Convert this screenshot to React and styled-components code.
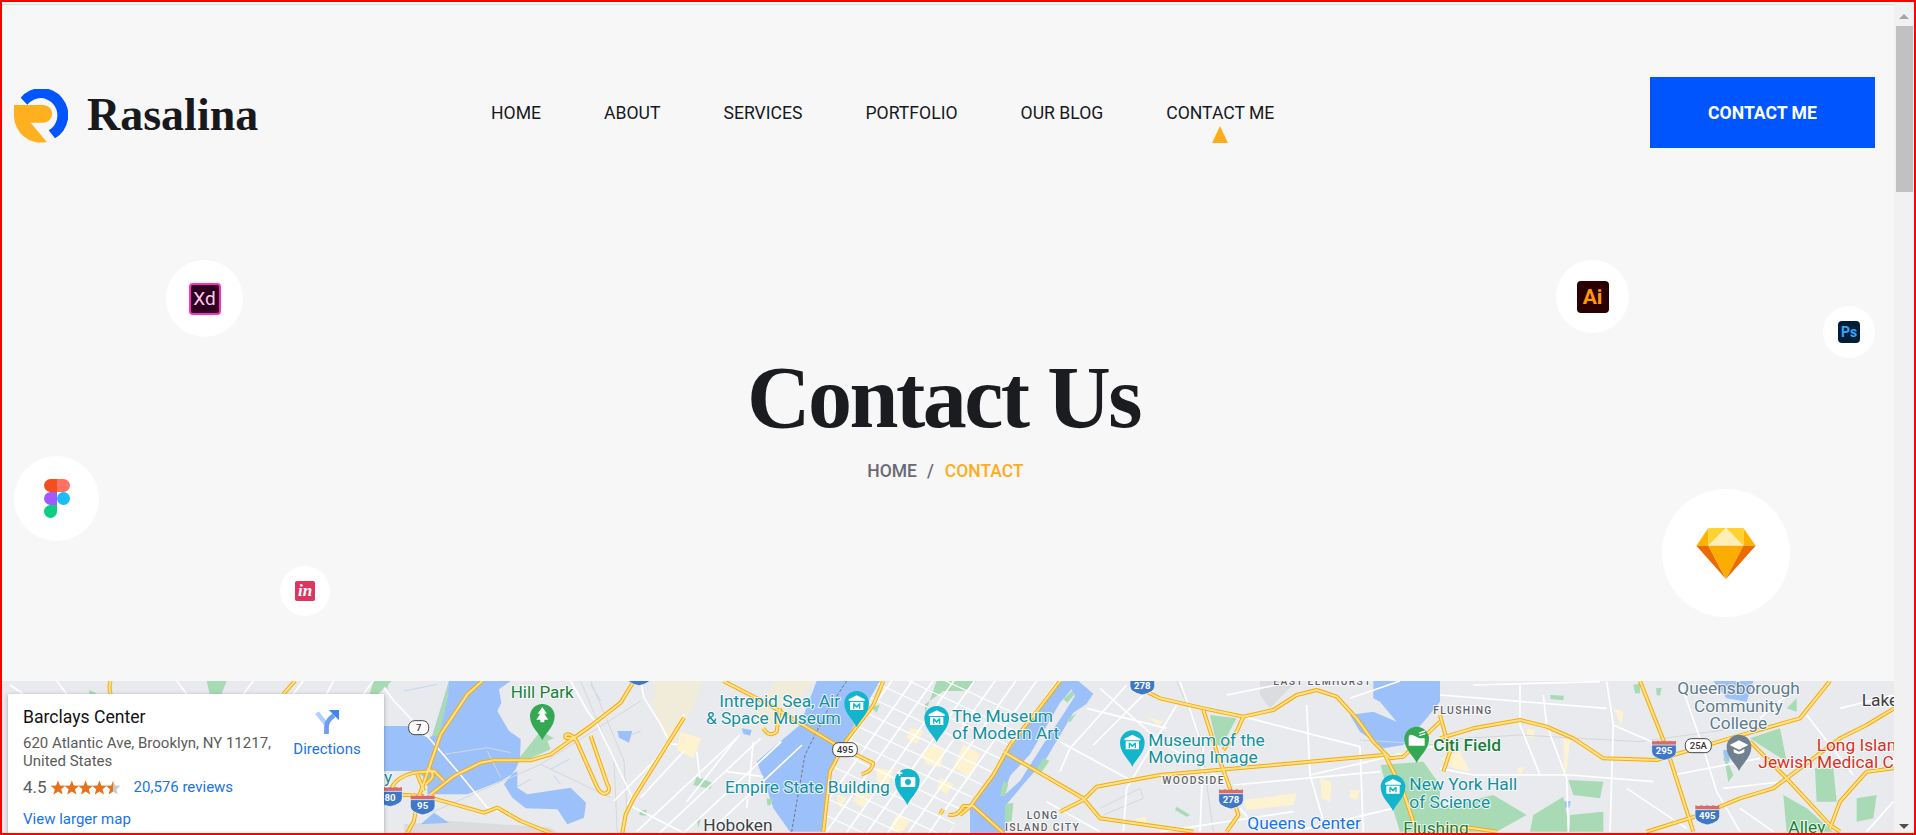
import React from 'react';
import styled, { createGlobalStyle } from 'styled-components';

const GlobalStyle = createGlobalStyle`
  html, body {
    margin: 0;
    padding: 0;
    overflow: hidden;
    background: #f7f7f7;
  }
`;

const Frame = styled.div`
  box-sizing: border-box;
  width: 1916px;
  height: 835px;
  border: 2px solid #f00;
  display: flex;
  overflow: hidden;
  background: #f7f7f7;
  font-family: Roboto, 'Liberation Sans', sans-serif;
`;

const Page = styled.div`
  flex: 1;
  min-width: 0;
  display: flex;
  flex-direction: column;
  padding-top: 2px;
`;

const TopRule = styled.div`
  height: 1px;
  background: #dcdcdc;
  flex: none;
`;

const Header = styled.header`
  display: flex;
  align-items: flex-start;
  padding: 72px 19px 0 12px;
  flex: none;
`;

const Brand = styled.a`
  display: flex;
  align-items: center;
  gap: 19px;
  width: 477px;
  height: 71px;
  padding-top: 6px;
  box-sizing: border-box;
`;

const BrandName = styled.span`
  margin-bottom: 3px;
  font-family: 'Liberation Serif', serif;
  font-weight: 700;
  font-size: 46px;
  color: #17191d;
`;

const Nav = styled.nav`
  display: flex;
  gap: 63px;
  padding-top: 26px;
`;

const NavItem = styled.a`
  position: relative;
  font-size: 17.6px;
  line-height: 20px;
  font-weight: 400;
  color: #17191d;

  ${(props) => props.$active && `
    &::after {
      content: '';
      position: absolute;
      left: 50%;
      top: 23px;
      margin-left: -8px;
      border-left: 8px solid transparent;
      border-right: 8px solid transparent;
      border-bottom: 17px solid #ffac1c;
    }
  `}
`;

const ContactButton = styled.a`
  margin-left: auto;
  width: 225px;
  height: 71px;
  display: flex;
  align-items: center;
  justify-content: center;
  background: #0055ff;
  color: #fff;
  font-size: 17.6px;
  font-weight: 700;
`;

const Hero = styled.section`
  position: relative;
  height: 533px;
  flex: none;
  display: flex;
  flex-direction: column;
  align-items: center;
  padding: 206px 5px 0 0;
  box-sizing: border-box;
`;

const Title = styled.h1`
  margin: 0 4px 0 0;
  font-family: 'Liberation Serif', serif;
  font-size: 88px;
  line-height: 88px;
  letter-spacing: -2.5px;
  font-weight: 700;
  color: #1a1c20;
`;

const Crumbs = styled.div`
  display: flex;
  gap: 10px;
  margin-top: 19px;
  font-size: 17.5px;
  line-height: 20px;
  font-weight: 500;
  color: #696a75;
`;

const CrumbActive = styled.span`
  color: #ffac1c;
  margin-left: 1px;
`;

const Bubble = styled.div`
  position: absolute;
  left: ${(props) => props.$left}px;
  top: ${(props) => props.$top}px;
  width: ${(props) => props.$size}px;
  height: ${(props) => props.$size}px;
  border-radius: 50%;
  background: #fff;
  display: flex;
  align-items: center;
  justify-content: center;
`;

const Tile = styled.div`
  box-sizing: border-box;
  width: ${(props) => props.$size}px;
  height: ${(props) => props.$size}px;
  border-radius: ${(props) => props.$radius || 4}px;
  background: ${(props) => props.$bg};
  color: ${(props) => props.$color};
  border: ${(props) => (props.$border ? `2px solid ${props.$border}` : 'none')};
  display: flex;
  align-items: center;
  justify-content: center;
  font-family: ${(props) => (props.$serif ? "'Liberation Serif', serif" : 'Roboto, sans-serif')};
  font-style: ${(props) => (props.$serif ? 'italic' : 'normal')};
  font-weight: ${(props) => props.$weight || 500};
  font-size: ${(props) => props.$font}px;
`;

const MapArea = styled.section`
  position: relative;
  flex: 1;
  min-height: 0;
  overflow: hidden;
  background: #e8eaed;
`;

const MapSvg = styled.svg`
  display: block;
  width: 100%;
  height: 100%;
  font-family: Roboto, sans-serif;
`;

const PlaceCard = styled.div`
  position: absolute;
  left: 6px;
  top: 13px;
  width: 376px;
  height: 160px;
  box-sizing: border-box;
  padding: 12px 15px;
  background: #fff;
  box-shadow: 0 1px 4px rgba(0, 0, 0, 0.3);
  display: flex;
  justify-content: space-between;
  color: #5b5b5b;
  font-size: 15px;
`;

const PlaceInfo = styled.div`
  width: 262px;
`;

const PlaceName = styled.div`
  font-size: 17.6px;
  line-height: 22px;
  font-weight: 400;
  color: #111;
`;

const Address = styled.div`
  margin-top: 6px;
  line-height: 18px;
`;

const RatingRow = styled.div`
  display: flex;
  align-items: center;
  margin-top: 6px;
  height: 22px;
`;

const RatingValue = styled.span`
  font-size: 17px;
  margin-right: 4px;
`;

const MapLink = styled.a`
  color: #1a73e8;
  font-size: 15px;
  margin-left: ${(props) => props.$indent || 0}px;
`;

const LargerMap = styled.div`
  margin-top: 12px;
`;

const Directions = styled.a`
  width: 68px;
  margin-right: 8px;
  padding-top: 4px;
  display: flex;
  flex-direction: column;
  align-items: center;
  gap: 6px;
  color: #1a73e8;
  font-size: 15px;
`;

const Scrollbar = styled.div`
  position: relative;
  width: 20px;
  flex: none;
  background: #f1f1f1;
  display: flex;
  flex-direction: column;
  align-items: center;
  justify-content: space-between;
  padding: 12px 0 4px;
  box-sizing: border-box;
`;

const ScrollThumb = styled.div`
  position: absolute;
  left: 2px;
  top: 24px;
  width: 17px;
  height: 166px;
  background: #c1c1c1;
`;

const ScrollArrow = styled.div`
  width: 0;
  height: 0;
  border-left: 5px solid transparent;
  border-right: 5px solid transparent;
  ${(props) => (props.$down ? 'border-top: 5px solid #505050;' : 'border-bottom: 5px solid #a3a3a3;')}
`;

const LogoMark = () => (
  <svg width="54" height="54" viewBox="42 84 162 162">
    <path fill="#0055ff" d="M62 110A81 81 0 1 1 165 232L146 208A52 52 0 0 0 123 111Q100 111 82 131Z" />
    <path fill="#ffb01f" d="M42 132H130A26 26 0 0 1 130 185H92L140 243A81 81 0 0 1 42 165Z" />
  </svg>
);

const FigmaMark = () => (
  <svg width="26" height="39" viewBox="0 0 26 39">
    <path fill="#f24e1e" d="M13 0H6.5a6.5 6.5 0 0 0 0 13H13z" />
    <path fill="#ff7262" d="M13 0h6.5a6.5 6.5 0 0 1 0 13H13z" />
    <path fill="#a259ff" d="M13 13H6.5a6.5 6.5 0 0 0 0 13H13z" />
    <circle fill="#1abcfe" cx="19.5" cy="19.5" r="6.5" />
    <path fill="#0acf83" d="M13 26H6.5a6.5 6.5 0 1 0 6.5 6.5z" />
  </svg>
);

const SketchMark = () => (
  <svg width="60" height="51" viewBox="0 0 59.3 51">
    <polygon fill="#fdb300" points="12,0 0,17.7 12,17.7" />
    <polygon fill="#fdb300" points="47,0 59.3,17.7 47,17.7" />
    <polygon fill="#fdd231" points="12,0 29.6,0 12,17.7" />
    <polygon fill="#fdd231" points="29.6,0 47,0 47,17.7" />
    <polygon fill="#feeeb7" points="29.6,0 47,17.7 12,17.7" />
    <polygon fill="#ea6c00" points="0,17.7 12,17.7 29.6,51" />
    <polygon fill="#fdad00" points="12,17.7 47,17.7 29.6,51" />
    <polygon fill="#ea6c00" points="47,17.7 59.3,17.7 29.6,51" />
  </svg>
);

const DirectionsIcon = () => (
  <svg width="24" height="24" viewBox="0 0 71 71">
    <path fill="none" stroke="#b4cdf9" strokeWidth="13" d="M6 8L28 36Q34 44 34 52" />
    <path fill="none" stroke="#6e9df5" strokeWidth="14" d="M34 71V50Q34 32 56 16" />
    <polygon fill="#4285f4" points="71,0 71,30 41,0" />
  </svg>
);

const STAR = 'M7 0l2 5 5.3.3-4.1 3.4 1.4 5.2L7 11l-4.6 2.9 1.4-5.2L-.3 5.3 5 5z';

const Stars = () => (
  <svg width="69" height="15" viewBox="0 0 69 15">
    <defs>
      <linearGradient id="halfStar">
        <stop offset="50%" stopColor="#e7711b" />
        <stop offset="50%" stopColor="#c9c9c9" />
      </linearGradient>
    </defs>
    {[0, 1, 2, 3, 4].map((i) => (
      <path key={i} d={STAR} transform={`translate(${i * 13.8} 0.5)`} fill={i === 4 ? 'url(#halfStar)' : '#e7711b'} />
    ))}
  </svg>
);

// map colours
const WATER = '#9cc0f9';
const PARK = '#a8dab5';
const BEIGE = '#f1ecd9';
const PALE = '#fdf3d0';
const TEAL = '#12909f';
const GREEN = '#188038';
const SLATE = '#5f7a8a';
const SMALL = { size: 31, color: '#5f6368', spacing: 4, weight: 500 };

// street grids, written in the coordinates of the crop they sit in
const parallel = (x0, y0, x1, y1, dx, dy, n) => Array.from({ length: n }, (_, i) => (
  `M${x0 + dx * i} ${y0 + dy * i}L${x1 + dx * i} ${y1 + dy * i}`
));

const manhattanAves = parallel(880, 520, 1262, -20, 62, 0, 11);
const manhattanCross = parallel(1040, -150, 1800, 207, 0, 52, 15);
const jerseyLines = parallel(470, 470, 780, 180, 62, 10, 4);

const CROPS = [
  {
    x: 0,
    park: [
      'M620 18H680L660 68 630 60Z',
      'M1120 18H1175L1100 90Z',
      'M268 45L288 55 280 65 268 58Z',
    ],
    roads: [
      'M170 18L200 57',
      'M30 30L70 57',
      'M530 18L560 57',
      'M730 57L760 18',
      'M880 57L910 18',
      'M980 57L1000 18',
      'M1090 57L1120 18',
    ],
    hwy: [
      'M332 18Q325 35 332 57',
      'M885 18L850 57',
    ],
  },
  {
    // the stretch right of the place card, finer than the rest
    x: 384,
    y: 681,
    water: [
      'M195 0H380L345 25 352 65 340 90 375 150 410 175 408 235 395 265 360 310 385 350 425 382 520 385 550 430 600 410 606 365 560 320 430 340 400 320 400 270 350 300 250 340 130 340 130 300 100 270 0 270V135H70L130 170 145 165Z',
      'M110 430L150 395 195 425Z',
      'M700 150L745 150 735 185 705 170Z',
    ],
    park: [
      'M405 232L470 150 510 172 490 180 500 205 440 232Z',
      'M145 165L190 20 195 0 192 50 165 165Z',
      'M0 10L15 0 10 25Z',
    ],
    concrete: ['M60 430L200 420 500 440 520 456H60Z'],
    beige: ['M800 60L860 0H900V80L860 180 830 130Z'],
    minor: [
      'M130 400L470 250 770 60',
      'M470 250L680 350',
      'M590 0L690 240 700 456',
      'M180 220L310 200 380 215',
      'M310 210L350 290',
      'M620 0L720 240 730 400',
    ],
    creeks: [
      'M60 30L160 10',
      'M620 10L650 60',
      'M500 265L555 235',
      'M510 285L530 310',
      'M395 320L440 295',
      'M745 160L770 150',
    ],
    roads: [
      'M0 20L30 60 130 165 220 270 310 380',
      'M560 0L610 90 640 130 750 360',
      'M700 70L660 110',
      'M770 0L780 50 830 130 860 190 880 190',
      'M900 100L730 370',
      'M900 210L770 350',
      'M730 370L900 456',
      'M860 190L690 360',
      'M310 380L360 395',
    ],
    hwy: [
      'M295 0L250 40 170 160 125 290 100 360 90 420 70 456',
      'M140 340L210 285 290 245 330 238 440 238 500 220 620 135 710 65 750 0',
      'M140 350L300 395 340 380 410 420 500 456',
      'M20 330Q30 290 90 275L150 270Q180 300 178 300',
      'M100 280L120 330',
      'M130 265Q150 270 145 290L125 310',
      'M0 338L120 345',
      'M575 175L545 170Q540 160 555 160 570 165 580 185L640 320Q655 345 670 335 680 325 670 310L620 165',
      'M900 110L850 190 750 350 725 400 715 456',
    ],
    labels: [
      { text: 'Hill Park', x: 380, y: 50, size: 51, color: GREEN },
      { text: 'y', x: 0, y: 305, size: 52, color: TEAL },
    ],
    pins: [{ x: 475, y: 178, color: '#34a853', kind: 'tree' }],
    ovals: [{ text: '7', x: 104, y: 140, w: 60 }],
    shields: [{ text: '95', x: 116, y: 370 }, { text: '80', x: 18, y: 345 }],
  },
  {
    x: 480,
    water: [
      'M1010 18H1200L1100 190 1050 280 1030 470H930L880 400 850 310 830 260 900 200 960 150Z',
      'M785 160L815 165 810 182 790 176Z',
    ],
    park: [
      'M650 305L700 325 690 342 640 330Z',
      'M480 405L500 405 498 422 478 420Z',
      'M860 370L880 375 870 392 862 390Z',
      'M650 430L662 432 655 458Z',
    ],
    beige: [
      'M520 18H665L640 100 570 215 545 170Z',
      'M885 18H1005L930 100 860 155 800 150Z',
    ],
    pale: ['M600 170L665 190 640 250 590 225Z'],
    dashed: ['M1100 18L1040 110 975 240 935 470'],
    roads: [
      'M650 230L660 310',
      'M740 290L850 305',
      'M770 190L620 380',
      'M820 200L800 400',
      ...jerseyLines,
    ],
    hwy: [
      'M730 18L860 85 1070 210 1180 265Q1175 290 1145 298',
      'M900 100L890 170Q870 190 850 160',
      'M1210 18L1180 90 1100 195 1050 290 1030 470',
    ],
    labels: [
      { text: 'Intrepid Sea, Air', x: 718, y: 95, size: 52, color: TEAL },
      { text: '& Space Museum', x: 678, y: 148, size: 52, color: TEAL },
      { text: 'Empire State Building', x: 735, y: 353, size: 52, color: TEAL },
      { text: 'Hoboken', x: 670, y: 467, size: 52, color: '#3c4043' },
    ],
    pins: [
      { x: 1130, y: 157, color: '#12b5cb', kind: 'museum' },
      { x: 1370, y: 202, color: '#12b5cb', kind: 'museum' },
      { x: 1282, y: 390, color: '#12b5cb', kind: 'camera' },
    ],
    ovals: [{ text: '495', x: 1095, y: 224, w: 74 }],
    shields: [{ text: '', x: 477, y: 0 }],
  },
  {
    // midtown and the East River
    x: 830,
    y: 681,
    water: [
      'M695 0H745L790 38 770 68 730 95 650 230 580 310 530 370 525 456H420V385L530 215 620 100Z',
    ],
    land: ['M520 345L540 285 600 220 690 65 725 25 735 45 700 100 640 190 570 300Z'],
    park: [
      'M320 0H440L405 30 340 30 285 70 285 100Z',
      'M700 55L728 28 732 42 712 65Z',
      'M708 120L740 95 722 122Z',
      'M620 265L640 230 658 240 635 272Z',
      'M510 345L520 300 535 310 525 345Z',
      'M525 370L550 365 545 420 525 425Z',
      'M125 80L150 70 140 95Z',
    ],
    pale: [
      'M270 220L310 190 345 210 330 260 290 250Z',
      'M400 190L450 220 420 290 370 260Z',
      'M240 140L280 150 260 190 230 170Z',
      'M330 290L370 310 350 340 320 320Z',
      'M140 260L190 270 170 320 140 300Z',
      'M200 400L240 420 215 456 180 440Z',
      'M90 320L120 340 100 380 70 360Z',
      'M20 340L50 350 30 380Z',
    ],
    hwy: [
      'M340 385L330 400',
      'M355 400Q380 410 400 375L430 375 520 456',
    ],
  },
  {
    x: 960,
    water: [
      'M1240 18H1440V80L1400 130 1330 210 1270 220 1200 170 1170 120 1240 110 1310 140 1260 80 1240 70Z',
    ],
    park: [
      'M750 120L830 130 785 212 770 210Z',
      'M1262 270L1390 260 1440 330V470H1320L1280 340Z',
      'M650 395L690 420 680 425 645 405Z',
    ],
    pale: [
      'M850 375L1010 355 1000 390 860 405Z',
      'M1080 310L1115 320 1110 380 1085 370Z',
      'M1170 345L1200 345 1190 375 1170 370Z',
      'M530 430L560 425 555 445 530 445Z',
      'M560 125L610 140 595 150Z',
    ],
    concrete: ['M900 18H1010L930 100 900 60Z', 'M1320 70H1360V18H1320Z'],
    minor: ['M420 400L540 340 550 370 430 420', 'M650 18L720 180 760 470', 'M1200 195L1440 210'],
    roads: [
      'M420 40L600 200 800 320',
      'M500 30L330 220 300 290',
      'M560 50L400 210',
      'M650 90L500 340 490 470',
      'M660 20L730 220 720 470',
      'M850 125L1200 215',
      'M1040 90L1050 300 1100 470',
      'M380 100L620 160',
      'M300 200L520 320',
      'M800 60L1000 20',
      'M1170 70L1320 18',
      'M600 470L1000 410',
      'M820 330L1260 290',
      'M1050 300L1440 210',
      'M260 380L420 470',
      'M840 400L900 470',
      'M1000 470L1300 400',
      'M1200 215L1210 470',
    ],
    hwy: [
      'M300 18L230 110 150 210 100 300 30 395 0 420',
      'M560 50L600 70 730 100 850 125 940 105 1010 60 1070 45 1130 65 1190 130 1240 200 1290 250 1330 245 1440 140',
      'M730 105L770 230 810 340 835 420 800 470',
      'M850 125L830 170 790 225',
      'M130 230L370 370 420 430 700 470',
      'M300 410L370 375 410 335 600 300 1000 265 1270 240',
      'M1270 230L1300 290 1330 350 1370 470',
    ],
    labels: [
      { text: 'The Museum', x: -24, y: 140, size: 52, color: TEAL },
      { text: 'of Modern Art', x: -24, y: 193, size: 52, color: TEAL },
      { text: 'Museum of the', x: 565, y: 213, size: 52, color: TEAL },
      { text: 'Moving Image', x: 565, y: 265, size: 52, color: TEAL },
      { text: 'WOODSIDE', x: 607, y: 326, ...SMALL },
      { text: 'LONG', x: 200, y: 432, ...SMALL },
      { text: 'ISLAND CITY', x: 135, y: 467, ...SMALL },
      { text: 'EAST ELMHURST', x: 940, y: 31, ...SMALL },
      { text: 'Queens Center', x: 862, y: 461, size: 52, color: '#1a73e8' },
      { text: 'New York Hall', x: 1348, y: 345, size: 52, color: TEAL },
      { text: 'of Science', x: 1348, y: 398, size: 52, color: TEAL },
      { text: 'Flushing', x: 1330, y: 477, size: 52, color: GREEN },
    ],
    pins: [
      { x: 517, y: 275, color: '#12b5cb', kind: 'museum' },
      { x: 1299, y: 408, color: '#12b5cb', kind: 'museum' },
      { x: 1370, y: 264, color: '#34a853', kind: 'stadium' },
    ],
    shields: [{ text: '278', x: 547, y: 28 }, { text: '278', x: 813, y: 370 }],
  },
  {
    x: 1440,
    water: [
      'M820 18H940L920 80 860 70Z',
      'M355 380L392 378 388 398 358 398Z',
      'M850 225L870 225 868 260 852 258Z',
    ],
    park: [
      'M580 30L600 25 600 55 585 55Z',
      'M648 40L665 38 660 62 650 60Z',
      'M330 60L372 62 370 76 332 72Z',
      'M385 315L490 320 480 370 400 360Z',
      'M280 420L370 365 390 470H270Z',
      'M390 420L490 410 490 470H390Z',
      'M160 360L260 420 170 470H0V400Z',
      'M1125 280L1180 280 1190 380 1130 380Z',
      'M1250 370L1310 360 1300 430 1250 440Z',
      'M1030 360L1100 400 1180 470H1040Z',
      'M850 230L880 300 865 322Z',
      'M930 190L1020 160 1040 260 960 210Z',
      'M1040 100L1070 70 1070 110Z',
    ],
    pale: [
      'M260 160L285 165 280 190 262 185Z',
      'M520 100L550 110 545 150Z',
      'M0 250L60 230 90 290 40 280Z',
      'M230 280L255 275 240 300Z',
      'M370 190L390 195 380 290 372 285Z',
    ],
    minor: ['M0 195L240 180 600 200 850 165'],
    roads: [
      'M240 30L240 150 300 300',
      'M310 60L320 150 380 310 385 470',
      'M500 20L520 150 510 470',
      'M0 60L500 100',
      'M100 30L480 20',
      'M520 150L680 220',
      'M0 280L100 300 390 300 640 320',
      'M560 340L740 460',
      'M700 300L960 250',
      'M720 18L790 220 830 350 900 470',
      'M1100 120L1240 300',
      'M1280 470L1360 380',
      'M850 340L1030 320',
      'M1200 100L1360 60',
      'M960 130L1040 60',
      'M900 400L1000 470',
    ],
    hwy: [
      'M0 190L100 160 240 135 320 155 400 190 490 250 650 255 870 190 1080 130 1170 18',
      'M600 18L680 220 760 470',
      'M1362 100L1280 150 1200 190 1040 310 1000 340 900 370 780 420 620 470',
      'M930 200L1040 310 1170 450 1200 470',
      'M1362 280L1280 290 1200 380 1170 460',
      'M0 455L100 460 170 470',
      'M0 120L30 230 10 290',
    ],
    labels: [
      { text: 'FLUSHING', x: -20, y: 118, ...SMALL },
      { text: 'Citi Field', x: -20, y: 228, size: 52, color: GREEN, weight: 500 },
      { text: 'Queensborough', x: 712, y: 58, size: 52, color: SLATE },
      { text: 'Community', x: 895, y: 110, size: 52, color: SLATE, anchor: 'middle' },
      { text: 'College', x: 895, y: 162, size: 52, color: SLATE, anchor: 'middle' },
      { text: 'Lake', x: 1265, y: 93, size: 52, color: '#3c4043' },
      { text: 'Long Island', x: 1130, y: 228, size: 52, color: '#d93025' },
      { text: 'Jewish Medical Center', x: 955, y: 278, size: 52, color: '#d93025' },
      { text: 'Alley', x: 1045, y: 475, size: 52, color: GREEN },
    ],
    pins: [{ x: 897, y: 288, color: '#70808e', kind: 'school' }],
    ovals: [{ text: '25A', x: 775, y: 212, w: 78 }],
    shields: [{ text: '295', x: 672, y: 224 }, { text: '495', x: 802, y: 418 }],
  },
];

const PinGlyph = ({ kind }) => {
  if (kind === 'tree') {
    return <path fill="#fff" d="M0-100L14-80H6L18-62H6V-54H-6V-62H-18L-6-80H-14Z" />;
  }
  if (kind === 'camera') {
    return (
      <g fill="#fff">
        <rect x="-20" y="-84" width="44" height="30" rx="4" />
        <path d="M-32-98h6v-6h5v6h6v5h-6v6h-5v-6h-6z" />
        <circle cx="2" cy="-69" r="9" fill="#12b5cb" />
      </g>
    );
  }
  if (kind === 'school') {
    return <path fill="#fff" d="M0-92L28-78 0-64-28-78ZM-16-66V-56Q0-46 16-56V-66L0-58Z" />;
  }
  if (kind === 'stadium') {
    return <path fill="#fff" d="M-24-52V-76Q-24-88-12-84L8-74H24V-52ZM8-92L26-98V-94L8-88ZM8-84L26-90V-86L8-80Z" />;
  }
  return (
    <g fill="#fff">
      <path d="M0-96L24-84V-79H-24V-84Z" />
      <path d="M-20-76H20V-52H-20ZM-11-72V-56H-7V-65L0-58 7-65V-56H11V-72H7L0-65-7-72Z" fillRule="evenodd" />
    </g>
  );
};

const MapPin = ({ x, y, color, kind }) => (
  <g transform={`translate(${x} ${y})`}>
    <path fill={color} d="M0 0C-6-18-37-40-37-72A37 37 0 1 1 37-72C37-40 6-18 0 0Z" />
    <PinGlyph kind={kind} />
  </g>
);

const Interstate = ({ x, y, text }) => (
  <g transform={`translate(${x} ${y})`}>
    <path fill="#d96a6a" d="M-36-14V-27Q-27-23-18-27-9-23 0-27 9-23 18-27 27-23 36-27V-14Z" />
    <path fill="#3f78c8" stroke="#fff" strokeWidth="2" d="M-37-14H37V6Q37 24 0 32-37 24-37 6Z" />
    <text x="0" y="14" textAnchor="middle" fontSize="29" fontWeight="700" fill="#fff">{text}</text>
  </g>
);

const OvalShield = ({ x, y, w, text }) => (
  <g transform={`translate(${x} ${y})`}>
    <rect x={-w / 2} y="-21" width={w} height="42" rx="18" fill="#fff" stroke="#444" strokeWidth="3" />
    <text x="0" y="11" textAnchor="middle" fontSize="29" fontWeight="500" fill="#333">{text}</text>
  </g>
);

const eachCrop = (render) => CROPS.map((crop) => (
  <g key={crop.x} transform={`translate(${crop.x} ${crop.y || 675}) scale(0.33333)`}>{render(crop)}</g>
));

const fills = (list, color) => (list || []).map((d) => <path key={d} d={d} fill={color} />);

const strokes = (list, color, width, extra) => (list || []).map((d) => (
  <path key={d} d={d} fill="none" stroke={color} strokeWidth={width} strokeLinejoin="round" {...extra} />
));

const MapDrawing = () => (
  <MapSvg viewBox="2 681 1892 152" preserveAspectRatio="none">
    <defs>
      <clipPath id="manhattan">
        <polygon points="1200,18 1740,18 1580,233 1450,398 1410,474 1030,480 1055,288" />
      </clipPath>
    </defs>
    <rect x="0" y="675" width="1916" height="160" fill="#e8eaed" />
    {eachCrop((c) => (
      <>
        {fills(c.concrete, '#dadce0')}
        {fills(c.beige, BEIGE)}
        {fills(c.water, WATER)}
        {fills(c.land, '#e8eaed')}
        {fills(c.pale, PALE)}
        {fills(c.park, PARK)}
      </>
    ))}
    {eachCrop((c) => (
      <>
        {strokes(c.creeks, '#aecbfa', 2)}
        {strokes(c.minor, '#d5d7db', 3)}
        {strokes(c.roads, '#fff', 5)}
        {strokes(c.dashed, '#70757a', 3, { strokeDasharray: '9 6' })}
      </>
    ))}
    <g transform="translate(480 675) scale(0.33333)" clipPath="url(#manhattan)">
      {strokes(manhattanAves, '#fff', 5)}
      {strokes(manhattanCross, '#fff', 3.5)}
    </g>
    {eachCrop((c) => strokes(c.hwy, '#f9ab00', 12))}
    {eachCrop((c) => strokes(c.hwy, '#fde293', 6))}
    {eachCrop((c) => (
      <>
        {(c.pins || []).map((p) => <MapPin key={`${p.x}-${p.y}`} {...p} />)}
        {(c.shields || []).map((s) => <Interstate key={`${s.x}-${s.y}`} {...s} />)}
        {(c.ovals || []).map((s) => <OvalShield key={s.text} {...s} />)}
        {(c.labels || []).map((l) => (
          <text
            key={l.text}
            x={l.x}
            y={l.y}
            fontSize={l.size}
            fontWeight={l.weight || 400}
            letterSpacing={l.spacing || 0}
            textAnchor={l.anchor || 'start'}
            fill={l.color}
            stroke="#fff"
            strokeWidth="6"
            strokeOpacity="0.8"
            paintOrder="stroke"
          >
            {l.text}
          </text>
        ))}
      </>
    ))}
  </MapSvg>
);

const NAV_ITEMS = ['HOME', 'ABOUT', 'SERVICES', 'PORTFOLIO', 'OUR BLOG', 'CONTACT ME'];

const App = () => (
  <Frame>
    <GlobalStyle />
    <Page>
      <TopRule />
      <Header>
        <Brand>
          <LogoMark />
          <BrandName>Rasalina</BrandName>
        </Brand>
        <Nav>
          {NAV_ITEMS.map((item) => (
            <NavItem key={item} $active={item === 'CONTACT ME'}>{item}</NavItem>
          ))}
        </Nav>
        <ContactButton>CONTACT ME</ContactButton>
      </Header>
      <Hero>
        <Bubble $left={164} $top={112} $size={77}>
          <Tile $size={32} $bg="#2e001f" $color="#ffc9ee" $border="#ff2bc2" $font={19} $weight={400}>Xd</Tile>
        </Bubble>
        <Bubble $left={12} $top={308} $size={85}>
          <FigmaMark />
        </Bubble>
        <Bubble $left={278} $top={418} $size={50}>
          <Tile $size={20} $radius={2} $bg="#dc3560" $color="#fff" $font={17} $serif $weight={700}>in</Tile>
        </Bubble>
        <Bubble $left={1554} $top={112} $size={73}>
          <Tile $size={32} $bg="#2b0000" $color="#ff9a00" $font={21} $weight={700}>Ai</Tile>
        </Bubble>
        <Bubble $left={1821} $top={158} $size={52}>
          <Tile $size={22} $bg="#001e36" $color="#31a8ff" $font={14} $weight={700}>Ps</Tile>
        </Bubble>
        <Bubble $left={1660} $top={341} $size={128}>
          <SketchMark />
        </Bubble>
        <Title>Contact Us</Title>
        <Crumbs>
          <span>HOME</span>
          <span>/</span>
          <CrumbActive>CONTACT</CrumbActive>
        </Crumbs>
      </Hero>
      <MapArea>
        <MapDrawing />
        <PlaceCard>
          <PlaceInfo>
            <PlaceName>Barclays Center</PlaceName>
            <Address>620 Atlantic Ave, Brooklyn, NY 11217, United States</Address>
            <RatingRow>
              <RatingValue>4.5</RatingValue>
              <Stars />
              <MapLink $indent={14}>20,576 reviews</MapLink>
            </RatingRow>
            <LargerMap>
              <MapLink>View larger map</MapLink>
            </LargerMap>
          </PlaceInfo>
          <Directions>
            <DirectionsIcon />
            Directions
          </Directions>
        </PlaceCard>
      </MapArea>
    </Page>
    <Scrollbar>
      <ScrollArrow />
      <ScrollThumb />
      <ScrollArrow $down />
    </Scrollbar>
  </Frame>
);

export default App;
